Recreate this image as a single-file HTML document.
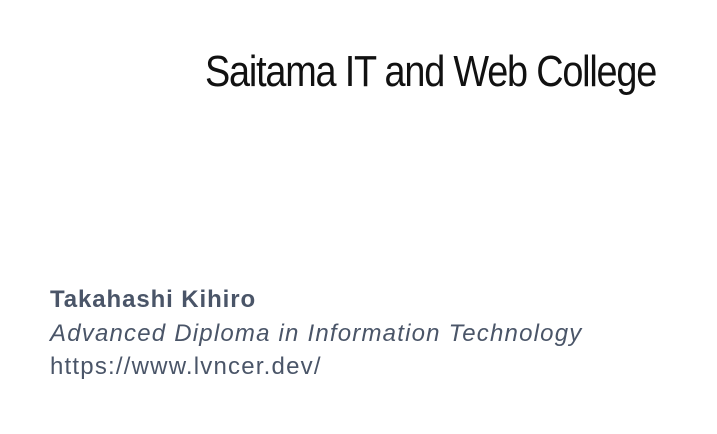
<!DOCTYPE html>
<html><head><style>
html,body{margin:0;padding:0;width:717px;height:434px;background:#fff;overflow:hidden}
.logo{position:absolute;left:205px;top:46px;font-family:"Liberation Sans",sans-serif;font-size:44px;color:#111;white-space:nowrap;letter-spacing:-1.4px;transform-origin:0 0;transform:scaleX(0.86);line-height:52px}
.info{position:absolute;left:50px;top:283px;font-family:"Liberation Sans",sans-serif;font-size:24px;letter-spacing:1.2px;color:#4a5568;line-height:33.5px;white-space:nowrap}
.n{font-weight:bold;letter-spacing:0.9px}
.i{font-style:italic}
</style></head><body>
<div class="logo">Saitama IT and Web College</div>
<div class="info"><div class="n">Takahashi Kihiro</div><div class="i">Advanced Diploma in Information Technology</div><div>https://www.lvncer.dev/</div></div>
</body></html>
